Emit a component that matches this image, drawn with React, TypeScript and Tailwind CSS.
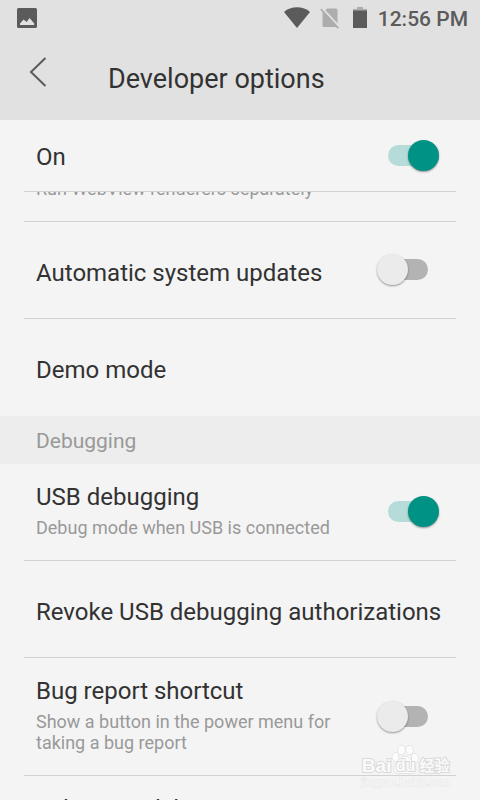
import { useState } from "react";

type RowProps = {
  id: string;
  title: string;
  summary?: string;
  defaultOn?: boolean;
};

function Switch({ id, defaultOn }: { id: string; defaultOn: boolean }) {
  const [on, setOn] = useState(defaultOn);
  return (
    <input
      id={id}
      type="checkbox"
      role="switch"
      checked={on}
      onChange={(e) => setOn(e.target.checked)}
      className="relative mr-7 mb-px h-[21px] w-10 shrink-0 appearance-none rounded-full bg-[#b3b3b3] before:absolute before:-left-[11px] before:-top-[5px] before:size-[31px] before:rounded-full before:bg-[#ebebeb] before:shadow-[0_1px_2px_rgba(0,0,0,0.4)] checked:bg-[#b5dcd8] checked:before:left-5 checked:before:bg-[#009385]"
    />
  );
}

function SwitchRow({ id, title, summary, defaultOn = false }: RowProps) {
  return (
    <div className="mx-6 flex min-h-[97px] items-center border-b border-[#d2d2d2] pl-3">
      <label
        htmlFor={id}
        className={
          summary
            ? "flex-1 pt-[17px] pb-[22px] pr-10 text-2xl leading-8"
            : "flex-1 pt-1.5 pr-10 text-2xl leading-8"
        }
      >
        {title}
        {summary && (
          <span className="mt-1 block text-lg leading-[21px] text-[#999999]">{summary}</span>
        )}
      </label>
      <Switch id={id} defaultOn={defaultOn} />
    </div>
  );
}

function ButtonRow({ title, summary, last }: { title: string; summary?: string; last?: boolean }) {
  return (
    <button
      type="button"
      className={
        last
          ? "mx-6 flex min-h-[97px] flex-col justify-center pl-3 pt-1 text-left text-2xl leading-8"
          : summary
            ? "mx-6 flex min-h-[97px] flex-col border-b border-[#d2d2d2] pt-[17px] pb-[22px] pl-3 text-left text-2xl leading-8"
            : "mx-6 flex min-h-[97px] flex-col justify-center border-b border-[#d2d2d2] pl-3 pt-1.5 text-left text-2xl leading-8"
      }
    >
      {title}
      {summary && (
        <span className="mt-1 block text-lg leading-[21px] text-[#999999]">{summary}</span>
      )}
    </button>
  );
}

function StatusBar() {
  return (
    <div className="flex h-9 items-center justify-between pl-[17px] pr-3 text-[#5b5b5b]">
      <svg width="20" height="20" viewBox="0 0 20 20" fill="currentColor" aria-hidden="true">
        <path
          fillRule="evenodd"
          d="M1.500 0h17A1.500 1.500 0 0 1 20 1.500v17a1.500 1.500 0 0 1-1.500 1.500h-17A1.500 1.500 0 0 1 0 18.500v-17A1.500 1.500 0 0 1 1.500 0zM3 17h14.200v-1.500L12.600 10l-3 4-3-2.500L3 15.500z"
        />
      </svg>
      <div className="flex items-center">
        <svg width="26" height="22" viewBox="0 0 26 22" fill="currentColor" aria-hidden="true">
          <path d="M0 5C3.500 1.800 8 .3 13 .3s9.500 1.500 13 4.700L13 21z" />
        </svg>
        <svg className="ml-2.5" width="20" height="22" viewBox="0 0 20 22" aria-hidden="true">
          <path d="M2.500 6.500 7 1.500h9a1.500 1.500 0 0 1 1.500 1.500v15.500A1.500 1.500 0 0 1 16 20H4a1.500 1.500 0 0 1-1.500-1.500z" fill="#adadad" />
          <path d="M2 1 19.500 20" stroke="#e1e1e1" strokeWidth="2" />
          <path d="M.8 2.200 18.300 21.200" stroke="#adadad" strokeWidth="1.800" />
        </svg>
        <svg className="ml-[13px]" width="14" height="22" viewBox="0 0 14 22" aria-hidden="true">
          <path d="M4 0h6v2h4v2H0V2h4z" fill="#adadad" />
          <path d="M0 3.500h14V21H0z" fill="currentColor" />
        </svg>
        <span className="ml-[11px] pt-0.5 text-[21px] font-medium leading-6">12:56 PM</span>
      </div>
    </div>
  );
}

function Watermark() {
  return (
    <div className="pointer-events-none absolute bottom-3 right-[30px] flex flex-col items-center">
      <div className="flex items-end font-['Liberation_Sans','Noto_Sans_CJK_SC',sans-serif] font-bold text-[#fafafa] [paint-order:stroke] [-webkit-text-stroke:2px_#dadada]">
        <span className="text-[19px] leading-5">Bai</span>
        <span className="relative flex h-8 w-7 items-end justify-center">
          <svg
            className="absolute left-0 top-0"
            width="28"
            height="30"
            viewBox="0 0 28 30"
            fill="#fcfcfc"
            stroke="#d4d4d4"
            aria-hidden="true"
          >
            <ellipse cx="4.500" cy="13" rx="3.200" ry="4.200" />
            <ellipse cx="10.500" cy="6" rx="3.400" ry="4.500" />
            <ellipse cx="18.500" cy="6" rx="3.400" ry="4.500" />
            <ellipse cx="23.800" cy="14" rx="3.200" ry="4.200" />
            <path d="M14 12.500c4 0 5 3.500 8 6s4.500 10.500-1 10.500H7c-5.500 0-4.500-8-1.500-10.500s4.500-6 8.500-6z" />
          </svg>
          <span className="relative text-base leading-5">du</span>
        </span>
        <span className="text-[15px] leading-5">经验</span>
      </div>
      <span className="font-['Liberation_Sans',sans-serif] text-[11px] leading-3 text-[#fafafa] [paint-order:stroke] [-webkit-text-stroke:1px_#e6e6e6]">
        jingyan.baidu.com
      </span>
    </div>
  );
}

export default function App() {
  return (
    <div className="relative flex h-screen flex-col overflow-hidden bg-[#f4f4f4] font-[Roboto,sans-serif] text-[#323232]">
      <header className="bg-[#e1e1e1]">
        <StatusBar />
        <div className="flex h-[84px] items-center pl-6">
          <button type="button" aria-label="Back" className="-mt-3 flex w-[84px] pl-1">
            <svg width="24" height="32" viewBox="0 0 24 32" fill="none" stroke="#5b5b5b" strokeWidth="2" aria-hidden="true">
              <path d="M17.500 2 3 16l14.500 14" />
            </svg>
          </button>
          <h1 className="pt-0.5 text-[27px] leading-8">Developer options</h1>
        </div>
      </header>

      <div className="mx-6 flex h-18 shrink-0 items-center border-b border-[#d2d2d2] pl-3">
        <label htmlFor="developer-options" className="flex-1 pt-0.5 text-2xl leading-8">
          On
        </label>
        <Switch id="developer-options" defaultOn />
      </div>

      <main className="flex min-h-0 flex-1 flex-col overflow-hidden *:shrink-0">
        <div className="mx-6 flex h-[30px] items-end overflow-hidden border-b border-[#d2d2d2] pb-[22px] pl-3 text-lg leading-[21px] text-[#999999]">
          Run WebView renderers separately
        </div>
        <SwitchRow id="system-updates" title="Automatic system updates" />
        <ButtonRow title="Demo mode" last />
        <h2 className="bg-[#ededed] px-9 pt-[9px] pb-[7px] text-[21px] leading-8 text-[#999999]">Debugging</h2>
        <SwitchRow
          id="usb-debugging"
          title="USB debugging"
          summary="Debug mode when USB is connected"
          defaultOn
        />
        <ButtonRow title="Revoke USB debugging authorizations" />
        <SwitchRow
          id="bug-report"
          title="Bug report shortcut"
          summary="Show a button in the power menu for taking a bug report"
        />
        <ButtonRow title="Select mock location app" summary="No mock location app set" />
      </main>

      <Watermark />
    </div>
  );
}
